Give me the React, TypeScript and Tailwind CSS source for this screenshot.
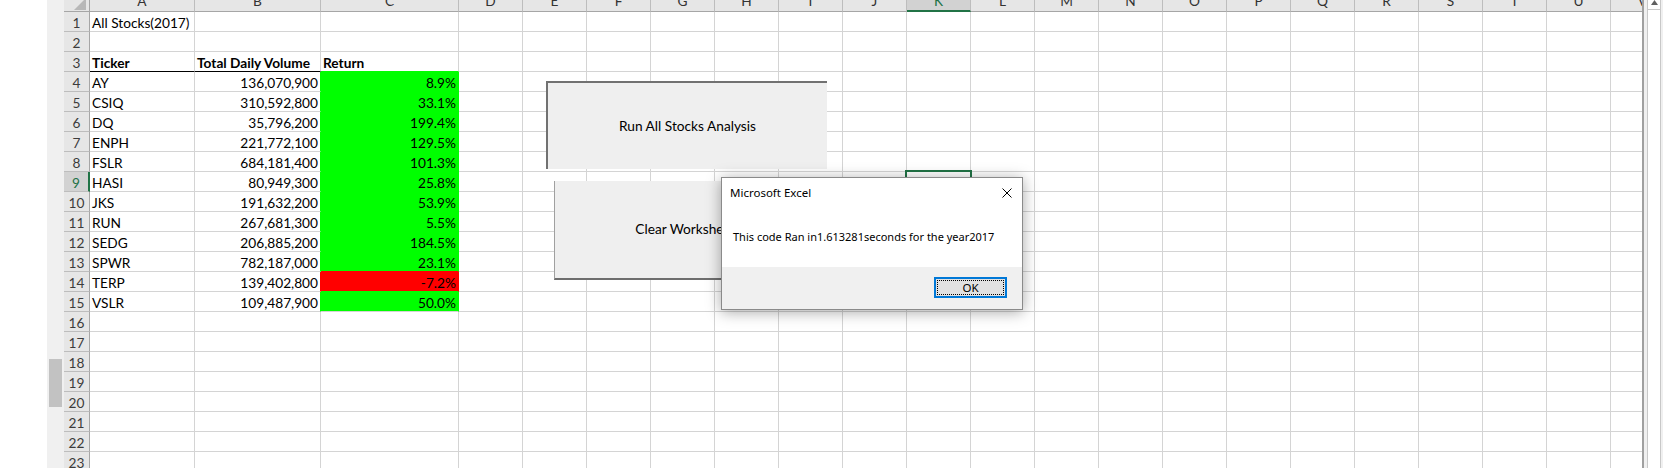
import React from "react";

const LETTERS = ["A","B","C","D","E","F","G","H","I","J","K","L","M","N","O","P","Q","R","S","T","U","V"];

function wClass(i: number) {
  if (i === 0) return "w-[105px]";
  if (i === 1) return "w-[126px]";
  if (i === 2) return "w-[138px]";
  return "w-[64px]";
}

const DATA: [string, string, string][] = [
  ["AY", "136,070,900", "8.9%"],
  ["CSIQ", "310,592,800", "33.1%"],
  ["DQ", "35,796,200", "199.4%"],
  ["ENPH", "221,772,100", "129.5%"],
  ["FSLR", "684,181,400", "101.3%"],
  ["HASI", "80,949,300", "25.8%"],
  ["JKS", "191,632,200", "53.9%"],
  ["RUN", "267,681,300", "5.5%"],
  ["SEDG", "206,885,200", "184.5%"],
  ["SPWR", "782,187,000", "23.1%"],
  ["TERP", "139,402,800", "-7.2%"],
  ["VSLR", "109,487,900", "50.0%"],
];

type Fill = "green" | "red" | null;
function fillFor(r: number): Fill {
  if (r >= 4 && r <= 15) return r === 14 ? "red" : "green";
  return null;
}

function cellText(r: number, c: number): { text: string; align: "left" | "right"; bold?: boolean } | null {
  if (r === 1 && c === 0) return { text: "All Stocks(2017)", align: "left" };
  if (r === 3) {
    if (c === 0) return { text: "Ticker", align: "left", bold: true };
    if (c === 1) return { text: "Total Daily Volume", align: "left", bold: true };
    if (c === 2) return { text: "Return", align: "left", bold: true };
  }
  if (r >= 4 && r <= 15 && c <= 2) {
    const row = DATA[r - 4];
    return { text: row[c], align: c === 0 ? "left" : "right" };
  }
  return null;
}

function Cell({ r, c }: { r: number; c: number }) {
  const f = fillFor(r);
  const below = fillFor(r + 1);
  let bg = "";
  if (c === 2 && f === "green") bg = "bg-[#00ff00]";
  if (c === 2 && f === "red") bg = "bg-[#ff0000]";
  let br = "border-r-[#d4d4d4]";
  if ((c === 1 || c === 2) && f === "green") br = "border-r-[#00ff00]";
  if ((c === 1 || c === 2) && f === "red") br = "border-r-[#ff0000]";
  let bb = "border-b-[#d4d4d4]";
  if (r === 3 && (c === 0 || c === 1)) bb = "border-b-black";
  else if (c === 2 && below === "green") bb = "border-b-[#00ff00]";
  else if (c === 2 && below === "red") bb = "border-b-[#ff0000]";
  const t = cellText(r, c);
  return (
    <div
      className={`${wClass(c)} shrink-0 h-[20px] box-border border-r border-b ${br} ${bb} ${bg} leading-[19px] pt-[1px] whitespace-nowrap ${
        t && t.align === "right" ? "text-right pr-[2px]" : "pl-[2px]"
      } ${t && t.bold ? "font-bold" : ""}`}
    >
      {t ? t.text : ""}
    </div>
  );
}

function HeaderRow() {
  return (
    <div className="flex mt-[-9px] shrink-0">
      <div className="w-[26px] shrink-0 h-[21px] box-border bg-[#e6e6e6] border-r border-b border-r-[#a6a6a6] border-b-[#a6a6a6] flex items-end justify-end pr-[3px] pb-[1px]">
        <svg width="12" height="12" viewBox="0 0 12 12">
          <polygon points="12,0 12,12 0,12" fill="#b8b8b8" />
        </svg>
      </div>
      {LETTERS.map((l, i) =>
        i === 10 ? (
          <div
            key={l}
            className={`${wClass(i)} shrink-0 h-[21px] box-border bg-[#d2d2d2] border-r border-r-[#bdbdbd] border-b-2 border-b-[#217346] text-center leading-[20px] text-[#217346]`}
          >
            {l}
          </div>
        ) : (
          <div
            key={l}
            className={`${wClass(i)} shrink-0 h-[21px] box-border bg-[#e6e6e6] border-r border-b border-r-[#bdbdbd] border-b-[#a6a6a6] text-center leading-[20px] text-[#333333]`}
          >
            {l}
          </div>
        )
      )}
    </div>
  );
}

function Row({ r }: { r: number }) {
  const sel = r === 9;
  return (
    <div className="flex shrink-0">
      {sel ? (
        <div className="w-[26px] shrink-0 h-[20px] box-border bg-[#d2d2d2] border-b border-b-[#bdbdbd] border-r-2 border-r-[#217346] text-center leading-[19px] pt-[1px] text-[#217346]">
          {r}
        </div>
      ) : (
        <div className="w-[26px] shrink-0 h-[20px] box-border bg-[#e6e6e6] border-b border-r border-b-[#bdbdbd] border-r-[#a6a6a6] text-center leading-[19px] pt-[1px] text-[#3c3c3c]">
          {r}
        </div>
      )}
      {LETTERS.map((l, c) => (
        <Cell key={l} r={r} c={c} />
      ))}
    </div>
  );
}

export default function App() {
  const rows = Array.from({ length: 23 }, (_, i) => i + 1);
  return (
    <div className="relative w-[1663px] h-[468px] overflow-hidden bg-white flex font-['Lato',sans-serif] text-[13.7px] text-black">
      <div className="w-[47px] shrink-0 bg-white" />
      <div className="w-[17px] shrink-0 bg-[#f0f0f0] flex flex-col pt-[359px] px-[2px]">
        <div className="h-[48px] bg-[#c2c2c2]" />
      </div>
      <div className="w-[1578px] shrink-0 overflow-hidden flex flex-col">
        <HeaderRow />
        {rows.map((r) => (
          <Row key={r} r={r} />
        ))}
      </div>
      <div className="w-[2px] shrink-0 bg-[#a0a0a0]" />
      <div className="w-[19px] shrink-0 bg-[#f0f0f0] flex pl-[3px]">
        <div className="w-[14px] border-x border-[#c8c8c8] bg-white flex flex-col">
          <div className="h-[10px] border-b border-[#c8c8c8] flex justify-center items-start">
            <svg width="7" height="5" viewBox="0 0 7 5">
              <polygon points="3.5,0 7,5 0,5" fill="#606060" />
            </svg>
          </div>
        </div>
      </div>

      {/* Form buttons floating on the sheet */}
      <div className="absolute left-[546px] top-[81px] w-[281px] h-[88px] box-border bg-[#efefef] border-t-2 border-l-2 border-[#717171] flex items-center justify-center">
        Run All Stocks Analysis
      </div>
      <div className="absolute left-[554px] top-[181px] w-[262px] h-[99px] box-border bg-[#efefef] border-l border-l-[#a0a0a0] border-b-2 border-b-[#6e6e6e] flex items-center justify-center">
        Clear Worksheet
      </div>

      {/* Active cell selection */}
      <div className="absolute left-[905px] top-[170px] w-[67px] h-[22px] border-2 border-[#217346]" />

      {/* Message box */}
      <div className="absolute left-[721px] top-[177px] w-[302px] h-[133px] box-border border border-[#8a8a8a] bg-white shadow-[0_2px_14px_rgba(0,0,0,0.35)] flex flex-col font-['Noto_Sans',sans-serif] text-black">
        <div className="h-[30px] shrink-0 flex items-center justify-between pl-[8px] pr-[10px] text-[11.5px]">
          <span>Microsoft Excel</span>
          <svg width="10" height="10" viewBox="0 0 10 10">
            <path d="M0.5 0.5L9.5 9.5M9.5 0.5L0.5 9.5" stroke="#000" strokeWidth="1" />
          </svg>
        </div>
        <div className="h-[59px] shrink-0 flex items-center pl-[11px] text-[11px]">
          This code Ran in1.613281seconds for the year2017
        </div>
        <div className="flex-1 bg-[#f0f0f0] flex justify-end items-start pt-[10px] pr-[15px] text-[11.5px]">
          <div className="w-[73px] h-[21px] box-border border-2 border-[#0078d7] bg-[#e1e1e1] p-[1px]">
            <div className="w-full h-full box-border border border-dotted border-black flex items-center justify-center leading-none">
              OK
            </div>
          </div>
        </div>
      </div>
    </div>
  );
}
